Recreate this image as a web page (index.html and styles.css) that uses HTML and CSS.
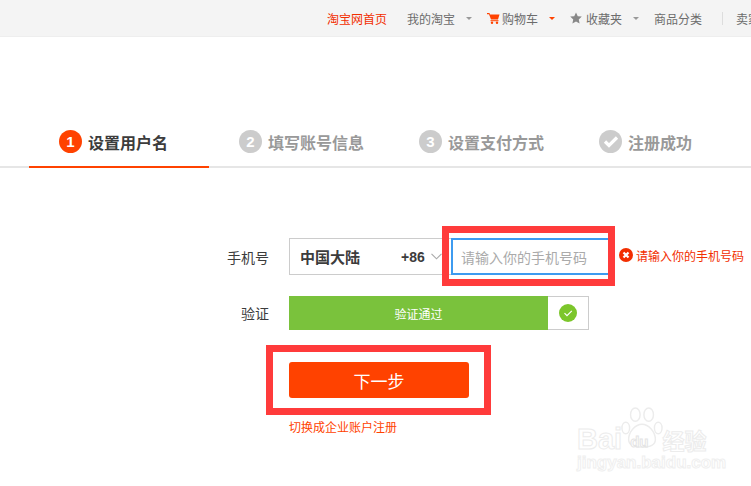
FILE: index.html
```html
<!DOCTYPE html>
<html lang="zh">
<head>
    <meta charset="utf-8">
    <title>淘宝网注册</title>
    <link rel="stylesheet" href="styles.css">
</head>
<body>
    <div class="topbar">
        <a class="nav-home" href="#">淘宝网首页</a>
        <a class="nav-item nav-mine" href="#">我的淘宝<i class="caret"></i></a>
        <a class="nav-item nav-cart" href="#">
            <svg class="nav-icon" width="13" height="12" viewBox="0 0 13 12"><path d="M0 1h2.500l.5 1.500h9.500l-1.500 5h-7L2 2.200H0z" fill="#ff4200"/><path d="M3.500 8.200h8v1h-8z" fill="#ff4200"/><circle cx="5" cy="10.800" r="1.200" fill="#ff4200"/><circle cx="10" cy="10.800" r="1.200" fill="#ff4200"/></svg>
            购物车<i class="caret caret-red"></i>
        </a>
        <a class="nav-item nav-fav" href="#">
            <svg class="nav-icon" width="12" height="12" viewBox="0 0 13 12"><path d="M6.500 0l1.900 4 4.400.5-3.300 3 .9 4.400-3.900-2.200-3.900 2.200.9-4.400-3.300-3 4.400-.5z" fill="#888"/></svg>
            收藏夹<i class="caret"></i>
        </a>
        <a class="nav-item nav-cat" href="#">商品分类</a>
        <span class="nav-sep"></span>
        <a class="nav-item" href="#">卖家中心</a>
    </div>

    <div class="steps">
        <div class="step active"><span class="num">1</span>设置用户名</div>
        <div class="step"><span class="num">2</span>填写账号信息</div>
        <div class="step"><span class="num">3</span>设置支付方式</div>
        <div class="step">
            <span class="num">
                <svg width="16" height="13" viewBox="0 0 16 13"><path d="M2 6.500l4 4 8-8" fill="none" stroke="#fff" stroke-width="3.200"/></svg>
            </span>注册成功
        </div>
    </div>

    <div class="form">
        <div class="row row-phone">
            <label>手机号</label>
            <div class="country">
                <b>中国大陆</b>
                <span class="code">+86</span>
                <svg class="chevron" width="11" height="7" viewBox="0 0 11 7"><path d="M.5.800l5 5 5-5" fill="none" stroke="#aaa" stroke-width="1.100"/></svg>
            </div>
            <input class="phone" type="text" placeholder="请输入你的手机号码">
            <div class="error">
                <svg width="14" height="14" viewBox="0 0 14 14"><circle cx="7" cy="7" r="7" fill="#f22e00"/><path d="M4.500 4.500l5 5m0-5l-5 5" stroke="#fff" stroke-width="2.200"/></svg>
                请输入你的手机号码
            </div>
        </div>
        <div class="row row-verify">
            <label>验证</label>
            <div class="verify-bar">验证通过</div>
            <div class="verify-ok">
                <svg width="18" height="18" viewBox="0 0 18 18"><circle cx="9" cy="9" r="9" fill="#7cc62b"/><path d="M5.500 9.200l2.500 2.500 4.800-4.800" fill="none" stroke="#fff" stroke-width="1.200"/></svg>
            </div>
        </div>
        <button class="next" type="button">下一步</button>
        <a class="switch" href="#">切换成企业账户注册</a>
    </div>

    <div class="mark mark-input"></div>
    <div class="mark mark-btn"></div>

    <div class="watermark">
        <svg class="paw" width="42" height="46" viewBox="0 0 44 46">
            <g fill="#fff" stroke="#ececec" stroke-width="1.500">
                <ellipse cx="5" cy="23" rx="4" ry="6"/>
                <ellipse cx="15" cy="9" rx="5" ry="7"/>
                <ellipse cx="29" cy="9" rx="5" ry="7"/>
                <ellipse cx="39" cy="23" rx="4" ry="6"/>
                <path d="M22 19c7 0 14 8 14 16 0 6-5 8-14 8s-14-2-14-8c0-8 7-16 14-16z"/>
            </g>
        </svg>
        <div class="wm-word"><span>Bai</span><span class="wm-du">du</span><span class="wm-cn">经验</span></div>
        <div class="wm-url">jingyan.baidu.com</div>
    </div>
</body>
</html>
```

FILE: styles.css
```css
* { margin: 0; padding: 0; box-sizing: border-box; }
html, body { height: 100%; }
body { background: #fff; overflow: hidden; width: 751px; height: 486px; position: relative; font-family: "Noto Sans CJK SC", "Noto Sans", sans-serif; font-size: 12px; color: #3c3c3c; }
a { text-decoration: none; color: inherit; }

.topbar { height: 37px; background: #f4f4f4; border-bottom: 1px solid #eee; display: flex; align-items: center; padding-left: 327px; color: #6c6c6c; white-space: nowrap; }
.nav-home { color: #f22e00; margin-right: 20px; }
.nav-item { display: flex; align-items: center; flex-shrink: 0; }
.nav-icon { margin-right: 2px; }
.nav-fav .nav-icon { margin-right: 4px; }
.caret { width: 0; height: 0; border: 3px solid transparent; border-top-color: #999; border-bottom-width: 0; margin-left: 11px; }
.caret-red { border-top-color: #ff4200; }
.nav-mine { margin-right: 15px; }
.nav-cart { margin-right: 15px; }
.nav-fav { margin-right: 15px; }
.nav-sep { width: 1px; height: 13px; background: #ddd; margin: 0 13px 0 20px; flex-shrink: 0; }

.steps { display: flex; margin-top: 93px; padding-left: 29px; height: 38px; border-bottom: 2px solid #e6e6e6; }
.step { width: 180px; height: 38px; padding-left: 30px; display: flex; align-items: flex-start; font-size: 16px; font-weight: 700; line-height: 24px; color: #999; }
.step.active { color: #3c3c3c; border-bottom: 2px solid #ff4200; }
.num { width: 23px; height: 23px; border-radius: 50%; background: #ccc; color: #fff; margin-right: 6px; display: flex; align-items: center; justify-content: center; font-family: "Liberation Sans", sans-serif; font-size: 15px; font-weight: 700; }
.active .num { background: #ff4200; }

.form { padding-left: 289px; margin-top: 70px; position: relative; }
.row { display: flex; position: relative; }
.row label { position: absolute; right: calc(100% + 20px); white-space: nowrap; font-size: 14px; color: #3c3c3c; }
.row-phone { height: 37px; align-items: center; }
.row-verify { height: 34px; margin-top: 21px; align-items: center; }

.country { width: 162px; height: 37px; border: 1px solid #ccc; border-right: 0; display: flex; align-items: center; padding-left: 10px; font-size: 14px; }
.country b { width: 101px; font-size: 15px; color: #3c3c3c; }
.code { font-family: "Liberation Sans", sans-serif; font-weight: 700; font-size: 14px; color: #3c3c3c; }
.chevron { margin-left: 6px; }
.phone { width: 158px; height: 37px; border: 1px solid #3d9bf0; border-width: 2px 1px 2px 2px; outline: 0; padding-left: 8px; font-family: inherit; font-size: 14px; }
.phone::placeholder { color: #aaa; }
.error { margin-left: 10px; display: flex; align-items: center; gap: 3px; color: #f22e00; white-space: nowrap; margin-top: -3px; }

.verify-bar { width: 259px; height: 34px; background: #7ac23c; color: #fff; font-size: 12px; display: flex; align-items: center; justify-content: center; }
.verify-ok { width: 41px; height: 34px; border: 1px solid #ccc; border-left: 0; display: flex; align-items: center; justify-content: center; }

.next { display: block; width: 180px; height: 36px; margin-top: 32px; background: #ff4200; border: 0; border-radius: 3px; color: #fff; font-family: inherit; font-size: 17px; }
.switch { display: block; margin-top: 20px; color: #ff4200; line-height: 18px; }

/* red annotation boxes drawn over the screenshot */
.mark { position: absolute; border: 7px solid #ff3b3b; }
.mark-input { left: 442px; top: 226px; width: 173px; height: 60px; }
.mark-btn { left: 266px; top: 345px; width: 225px; height: 70px; }

.watermark { position: absolute; left: 577px; top: 405px; width: 140px; height: 70px; color: #fff; }
.paw { position: absolute; left: 44px; top: 0; }
.wm-word { position: absolute; left: 0; top: 16px; display: flex; align-items: center; font-family: "Liberation Sans", sans-serif; font-size: 29px; font-weight: 700; line-height: 30px; -webkit-text-stroke: 1px #ececec; }
.wm-du { position: relative; font-size: 15px; margin-left: 8px; margin-top: 6px; -webkit-text-stroke: 1px #e4e4e4; }
.wm-cn { font-family: "Noto Sans CJK SC", sans-serif; font-size: 22px; margin-left: 14px; }
.wm-url { position: absolute; left: 0; top: 48px; font-family: "Liberation Sans", sans-serif; font-size: 17px; font-weight: 700; -webkit-text-stroke: 1px #efefef; white-space: nowrap; }
```
